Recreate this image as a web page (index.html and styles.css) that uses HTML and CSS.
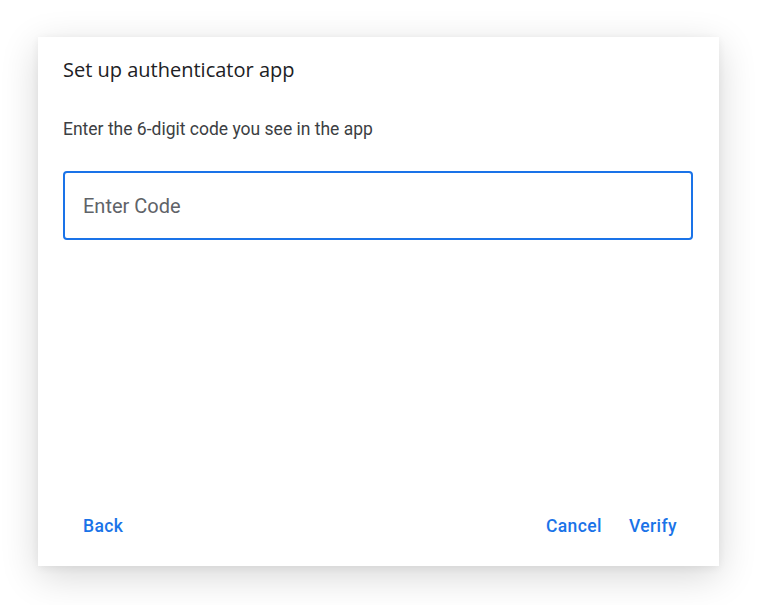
FILE: index.html
```html
<!DOCTYPE html>
<html>
<head>
<meta charset="utf-8">
<link rel="stylesheet" href="styles.css">
</head>
<body>
<div class="dialog">
  <h1 class="title">Set up authenticator app</h1>
  <p class="desc">Enter the 6-digit code you see in the app</p>
  <div class="field"><input class="code" type="text" placeholder="Enter Code"></div>
  <div class="footer">
    <button class="btn back">Back</button>
    <div class="actions">
      <button class="btn">Cancel</button>
      <button class="btn">Verify</button>
    </div>
  </div>
</div>
</body>
</html>
```

FILE: styles.css
```css
html, body { margin: 0; padding: 0; background: #fff; }
body { width: 760px; height: 605px; overflow: hidden; font-family: Roboto, "Liberation Sans", sans-serif; }
.dialog {
  margin: 37px 0 0 38px;
  width: 681px;
  height: 529px;
  box-sizing: border-box;
  padding: 20px 26px 22px 25px;
  background: #fff;
  display: flex;
  flex-direction: column;
  box-shadow: 0 10px 36px rgba(0,0,0,0.16), 0 2px 8px rgba(0,0,0,0.06);
}
.title {
  margin: 0;
  font-family: "Open Sans", Roboto, sans-serif;
  font-weight: 400;
  font-size: 20px;
  line-height: 26px;
  color: #202124;
}
.desc {
  margin: 34px 0 0;
  font-size: 17.5px;
  line-height: 24px;
  color: #3c4043;
}
.field { margin-top: 30px; }
.code {
  display: block;
  width: 100%;
  height: 69px;
  box-sizing: border-box;
  border: 2px solid #1a73e8;
  border-radius: 4px;
  padding: 0 18px;
  font-family: Roboto, sans-serif;
  font-size: 20px;
  color: #202124;
  outline: none;
}
.code::placeholder { color: #5f6368; }
.footer {
  margin-top: auto;
  display: flex;
  justify-content: space-between;
  align-items: center;
}
.actions { display: flex; gap: 3px; margin-right: 4px; }
.btn {
  height: 36px;
  padding: 0 12px;
  border: none;
  background: none;
  font-family: Roboto, "Open Sans", sans-serif;
  font-weight: 500;
  font-size: 17.5px;
  letter-spacing: 0.4px;
  color: #1a73e8;
  cursor: pointer;
}
.back { margin-left: 8px; }
```
